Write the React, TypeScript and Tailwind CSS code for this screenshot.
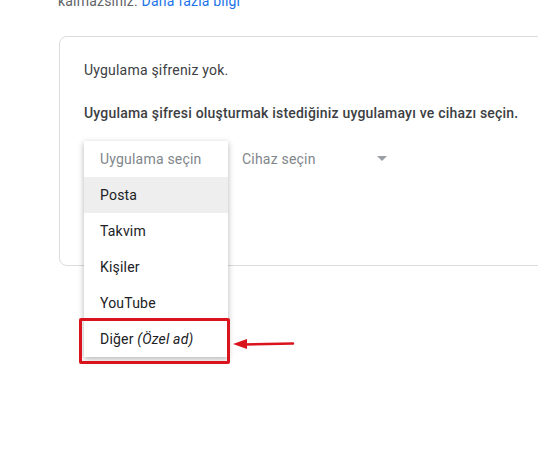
import React from "react";

export default function App() {
  const items = ["Posta", "Takvim", "Kişiler", "YouTube"];
  return (
    <div
      className="relative w-[538px] h-[475px] overflow-hidden bg-white text-[14px] tracking-[0.2px] text-[#202124]"
      style={{ fontFamily: "Roboto, 'Liberation Sans', sans-serif" }}
    >
      <div className="mt-[-9px] ml-[58px] leading-[20px] text-[#5f6368] whitespace-nowrap">
        kalmazsınız. <span className="text-[#1a73e8]">Daha fazla bilgi</span>
      </div>
      <div className="relative mt-[25px] ml-[59px] w-[520px] h-[230px] border border-[#dadce0] rounded-lg pl-[24px] pt-[23px]">
        <div className="leading-[20px] text-[#3c4043]">Uygulama şifreniz yok.</div>
        <div className="mt-[23px] leading-[20px] font-medium text-[#3c4043] whitespace-nowrap">
          Uygulama şifresi oluşturmak istediğiniz uygulamayı ve cihazı seçin.
        </div>
        <div className="relative mt-[18px] flex items-center h-[36px]">
          <div className="w-[158px]" />
          <div className="flex items-center w-[148px] justify-between text-[#80868b]">
            <span>Cihaz seçin</span>
            <svg width="12" height="6" viewBox="0 0 12 6" className="mr-[2px]">
              <path d="M1 0 L11 0 L6 5 Z" fill="#9aa0a6" />
            </svg>
          </div>
        </div>
      </div>
      {/* Dropdown menu overlay */}
      <div className="absolute left-[84px] top-[141px] w-[144px] bg-white shadow-[0_2px_6px_rgba(0,0,0,0.3)]">
        <div className="h-[36px] flex items-center pl-[16px] text-[#80868b]">Uygulama seçin</div>
        {items.map((it, i) => (
          <div
            key={it}
            className={
              i === 0
                ? "h-[36px] flex items-center pl-[16px] bg-[#eeeeee] text-[#202124]"
                : "h-[36px] flex items-center pl-[16px] text-[#202124]"
            }
          >
            {it}
          </div>
        ))}
        <div className="h-[36px] flex items-center pl-[16px] text-[#202124]">
          Diğer&nbsp;<span className="italic">(Özel ad)</span>
        </div>
      </div>
      {/* Red highlight box */}
      <div className="absolute left-[79px] top-[318px] w-[151px] h-[46px] border-[3px] border-[#d9141c] rounded-[2px]" />
      {/* Arrow */}
      <svg className="absolute left-[230px] top-[336px]" width="66" height="16" viewBox="0 0 66 16">
        <path d="M63 7.5 L14 8.5" stroke="#d9141c" strokeWidth="2.5" strokeLinecap="round" />
        <path d="M3 8 L17 3 L17 13 Z" fill="#d9141c" />
      </svg>
    </div>
  );
}
